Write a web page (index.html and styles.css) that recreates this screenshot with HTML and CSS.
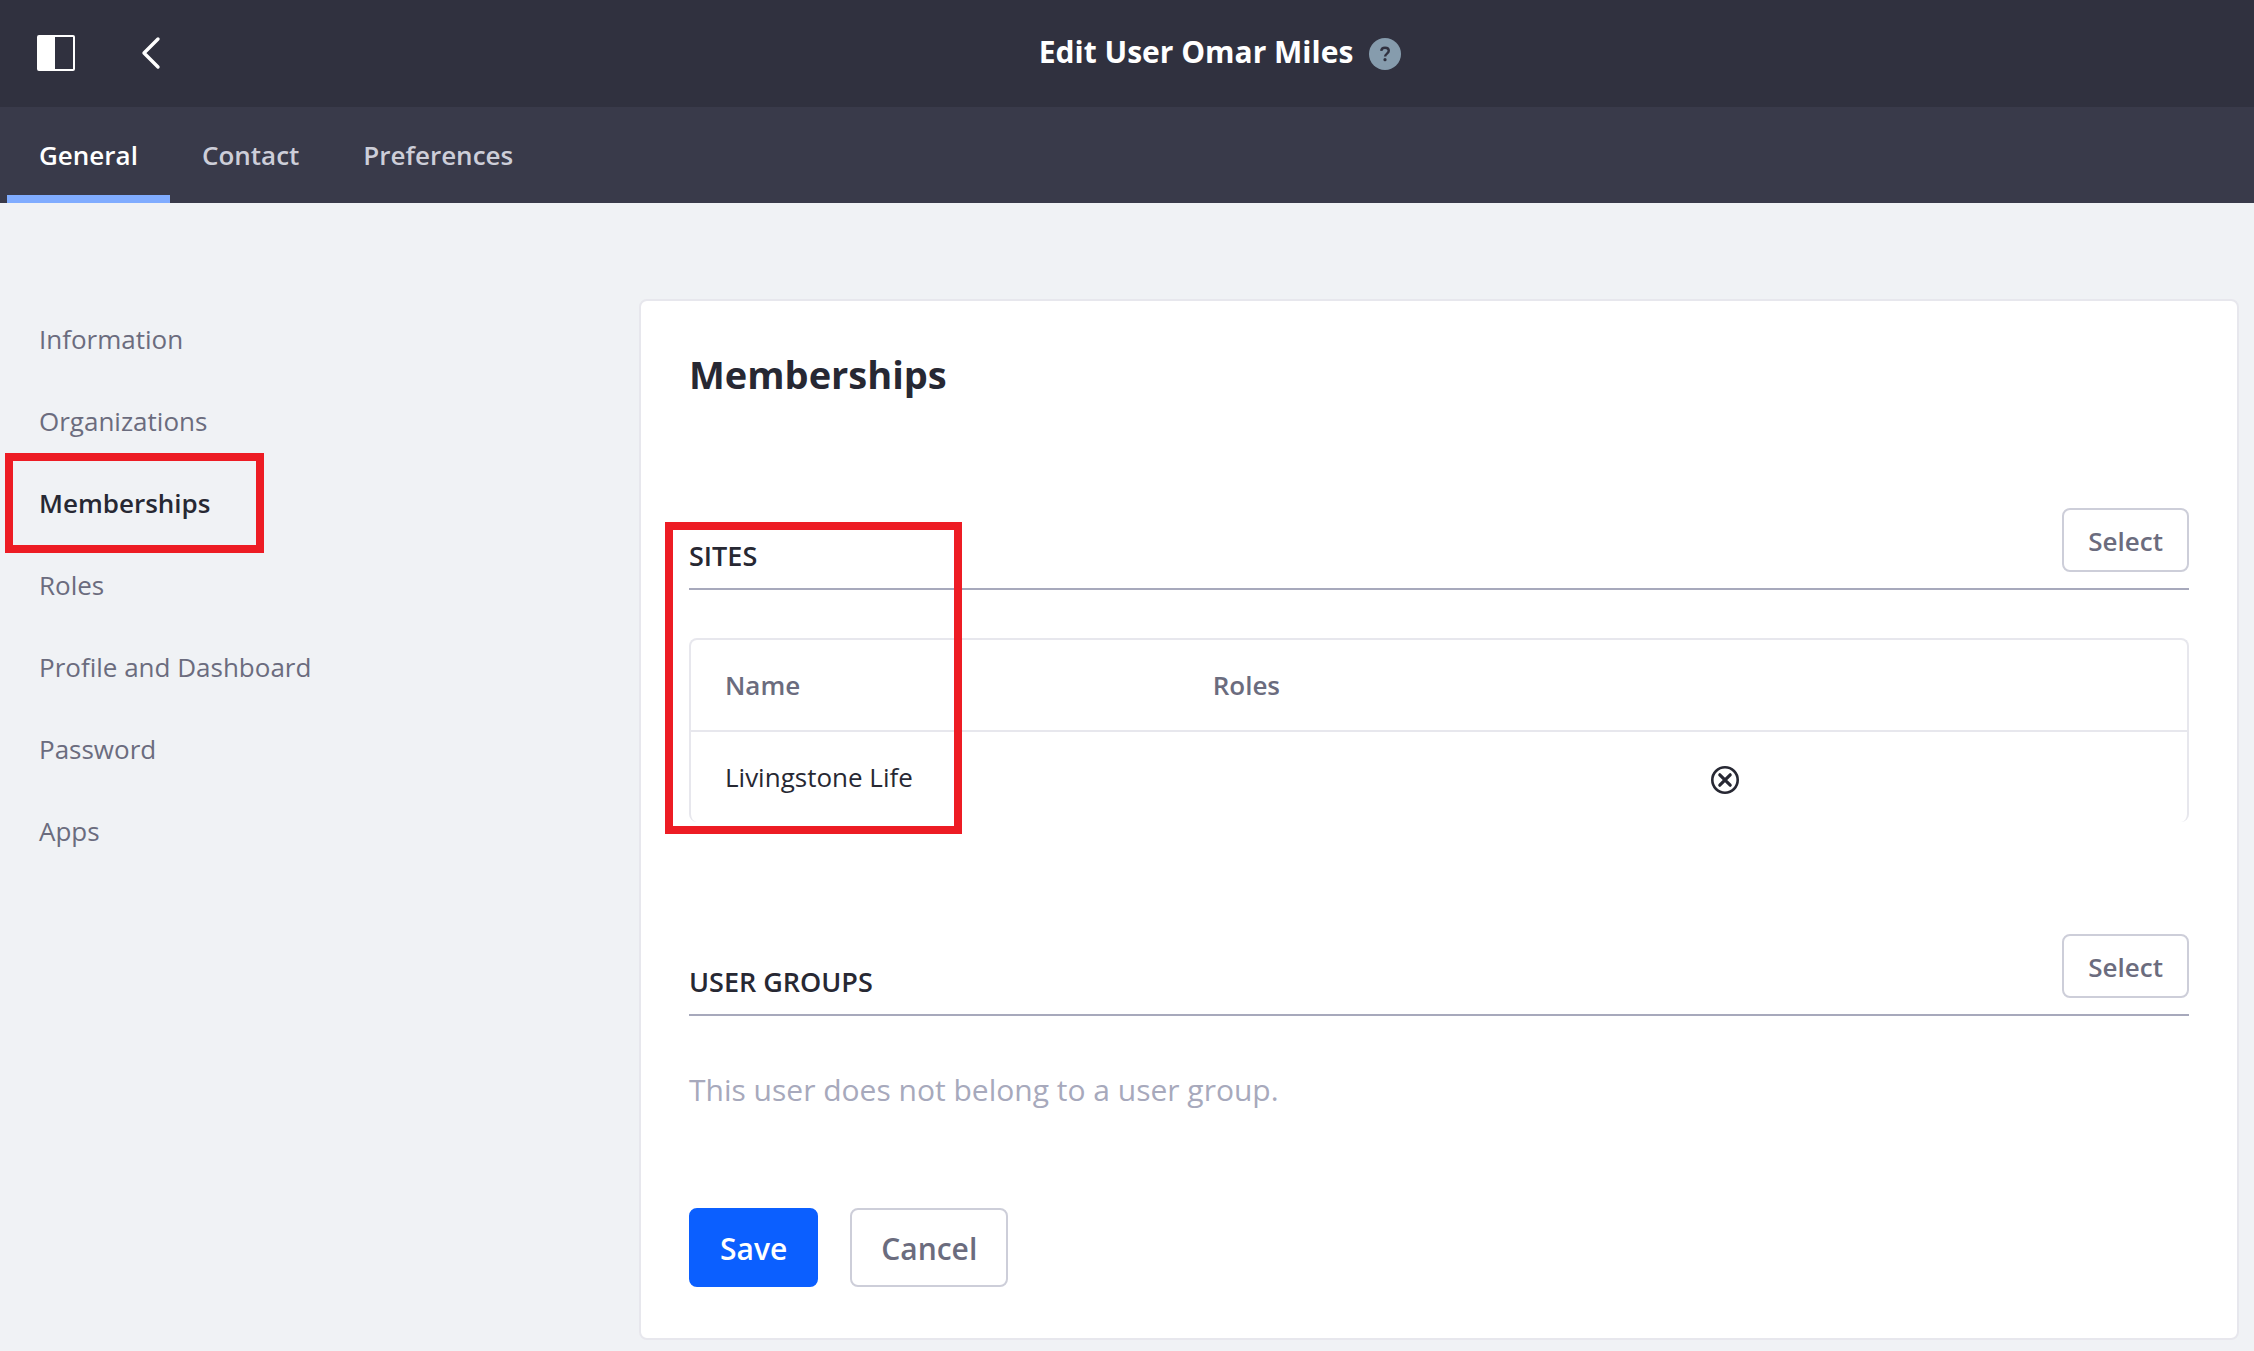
FILE: index.html
```html
<!DOCTYPE html>
<html lang="en">
<head>
<meta charset="utf-8">
<title>Edit User Omar Miles</title>
<link rel="stylesheet" href="styles.css">
</head>
<body>
<header class="topbar">
  <div class="topbar-start">
    <button class="icon-button" type="button" aria-label="Toggle product menu">
      <svg width="38" height="36" viewBox="0 0 38 36"><rect x="1" y="1" width="36" height="34" rx="1" fill="none" stroke="#fff" stroke-width="2"/><path d="M1 1h17v34H1z" fill="#fff"/></svg>
    </button>
    <a class="back" href="#" aria-label="Back">
      <svg width="20" height="34" viewBox="0 0 20 34"><path d="M17 3L3 17L17 31" fill="none" stroke="#fff" stroke-width="3.4" stroke-linecap="round" stroke-linejoin="round"/></svg>
    </a>
  </div>
  <div class="topbar-title">
    <h1 class="page-title">Edit User Omar Miles</h1>
    <button class="icon-button" type="button" aria-label="Help">
      <svg width="32" height="32" viewBox="0 0 32 32"><circle cx="16" cy="16" r="16" fill="#869cad"/><path d="M12.2 12.9C12.4 10.8 13.8 9.7 16 9.7C18.3 9.7 19.8 10.9 19.8 12.8C19.8 15.6 16.1 15.6 16.1 18.6" fill="none" stroke="#30313f" stroke-width="2.4"/><circle cx="16" cy="21.7" r="1.6" fill="#30313f"/></svg>
    </button>
  </div>
</header>
<nav class="tabs">
  <a class="tab tab-active" href="#" aria-current="page">General</a>
  <a class="tab" href="#">Contact</a>
  <a class="tab" href="#">Preferences</a>
</nav>
<div class="layout">
  <nav class="sidebar">
    <a class="side-link" href="#">Information</a>
    <a class="side-link" href="#">Organizations</a>
    <a class="side-link side-active" href="#" aria-current="page">Memberships<span class="mark mark-menu"></span></a>
    <a class="side-link" href="#">Roles</a>
    <a class="side-link" href="#">Profile and Dashboard</a>
    <a class="side-link" href="#">Password</a>
    <a class="side-link" href="#">Apps</a>
  </nav>
  <main class="card">
    <h2 class="card-title">Memberships</h2>
    <section class="section">
      <span class="mark mark-sites"></span>
      <div class="section-head">
        <h3 class="section-title">SITES</h3>
        <button class="button button-small" type="button">Select</button>
      </div>
      <div class="table-frame">
        <table class="table">
          <thead><tr><th>Name</th><th>Roles</th><th></th></tr></thead>
          <tbody><tr><td>Livingstone Life</td><td></td><td>
            <button class="icon-button" type="button" aria-label="Remove">
              <svg width="28" height="28" viewBox="0 0 28 28"><circle cx="14" cy="14" r="12.7" fill="none" stroke="#272833" stroke-width="2.6"/><path d="M8.8 8.8L19.2 19.2M19.2 8.8L8.8 19.2" stroke="#272833" stroke-width="3.2" stroke-linecap="round"/></svg>
            </button></td></tr></tbody>
        </table>
      </div>
    </section>
    <section class="section">
      <div class="section-head">
        <h3 class="section-title">USER GROUPS</h3>
        <button class="button button-small" type="button">Select</button>
      </div>
      <p class="empty">This user does not belong to a user group.</p>
    </section>
    <div class="actions">
      <button class="button button-primary" type="submit">Save</button>
      <button class="button" type="button">Cancel</button>
    </div>
  </main>
</div>
</body>
</html>
```
FILE: styles.css
```css
* { box-sizing: border-box; }

body {
  margin: 0;
  background: #f0f2f5;
  color: #272833;
  font-family: "Open Sans", "Noto Sans", sans-serif;
  font-size: 26px;
  line-height: 40px;
}

h1, h2, h3, p { margin: 0; }
a { color: inherit; text-decoration: none; }
svg { display: block; }

.icon-button {
  padding: 0;
  border: 0;
  background: none;
  vertical-align: middle;
  cursor: pointer;
}

/* Header */
.topbar {
  display: grid;
  grid-template-columns: 1fr auto 1fr;
  align-items: center;
  height: 107px;
  padding: 0 37px;
  background: #30313f;
}
.topbar-start { display: flex; align-items: center; gap: 66px; padding-bottom: 2px; }
.topbar-title { display: flex; align-items: center; gap: 16px; margin-left: 186px; }
.page-title { padding-bottom: 4px; color: #fff; font-size: 30px; font-weight: 700; line-height: 40px; }

/* Tabs */
.tabs {
  display: flex;
  height: 96px;
  padding: 0 7px;
  background: #393a4a;
  color: #cdced9;
  font-weight: 600;
}
.tab {
  padding: 28px 32px 20px;
  border-bottom: 8px solid transparent;
}
.tab-active { border-color: #80acff; color: #fff; }

/* Page body */
.layout {
  display: grid;
  grid-template-columns: 639px 1fr;
  align-items: start;
  padding: 96px 15px 11px 0;
}
.sidebar { display: flex; flex-direction: column; padding: 0 39px; }
.side-link { position: relative; padding: 20px 0 22px; color: #6b6c7e; }
.side-active { color: #272833; font-weight: 600; }

.card {
  padding: 51px 48px;
  border: 2px solid #e7e7ed;
  border-radius: 8px;
  background: #fff;
}
.card-title { font-size: 38px; font-weight: 700; line-height: 44px; }

.section { position: relative; margin-top: 112px; }
.section-head {
  display: flex;
  align-items: flex-end;
  justify-content: space-between;
  padding-bottom: 16px;
  border-bottom: 2px solid #a7a9bc;
}
.section-title { font-size: 27px; font-weight: 600; line-height: 32px; }

.table-frame {
  margin-top: 48px;
  border: 2px solid #e7e7ed;
  border-bottom: 0;
  border-radius: 8px;
}
.table { width: 100%; border-collapse: collapse; table-layout: fixed; text-align: left; }
.table th, .table td { height: 91px; padding: 0 23px; }
.table th { border-bottom: 2px solid #e7e7ed; color: #6b6c7e; font-weight: 600; }
.table th:first-child, .table td:first-child { padding-left: 34px; }

.empty { margin-top: 54px; color: #a7a9bc; font-size: 30px; }

/* Buttons */
.button {
  height: 79px;
  padding: 2px 29px 0;
  border: 2px solid #cdced9;
  border-radius: 8px;
  background: #fff;
  color: #6b6c7e;
  font-family: inherit;
  font-size: 30px;
  font-weight: 600;
}
.button-small { height: 64px; padding: 2px 24px 0; font-size: 26px; }
.button-primary { border-color: #0b5fff; background: #0b5fff; color: #fff; }
.actions { display: flex; gap: 32px; margin-top: 98px; }

/* Highlight frames laid over the page */
.mark { position: absolute; border: 8px solid #ed1c24; pointer-events: none; }
.mark-menu { top: -10px; left: -34px; width: 259px; height: 100px; }
.mark-sites { top: 14px; left: -24px; width: 297px; height: 312px; }
```
